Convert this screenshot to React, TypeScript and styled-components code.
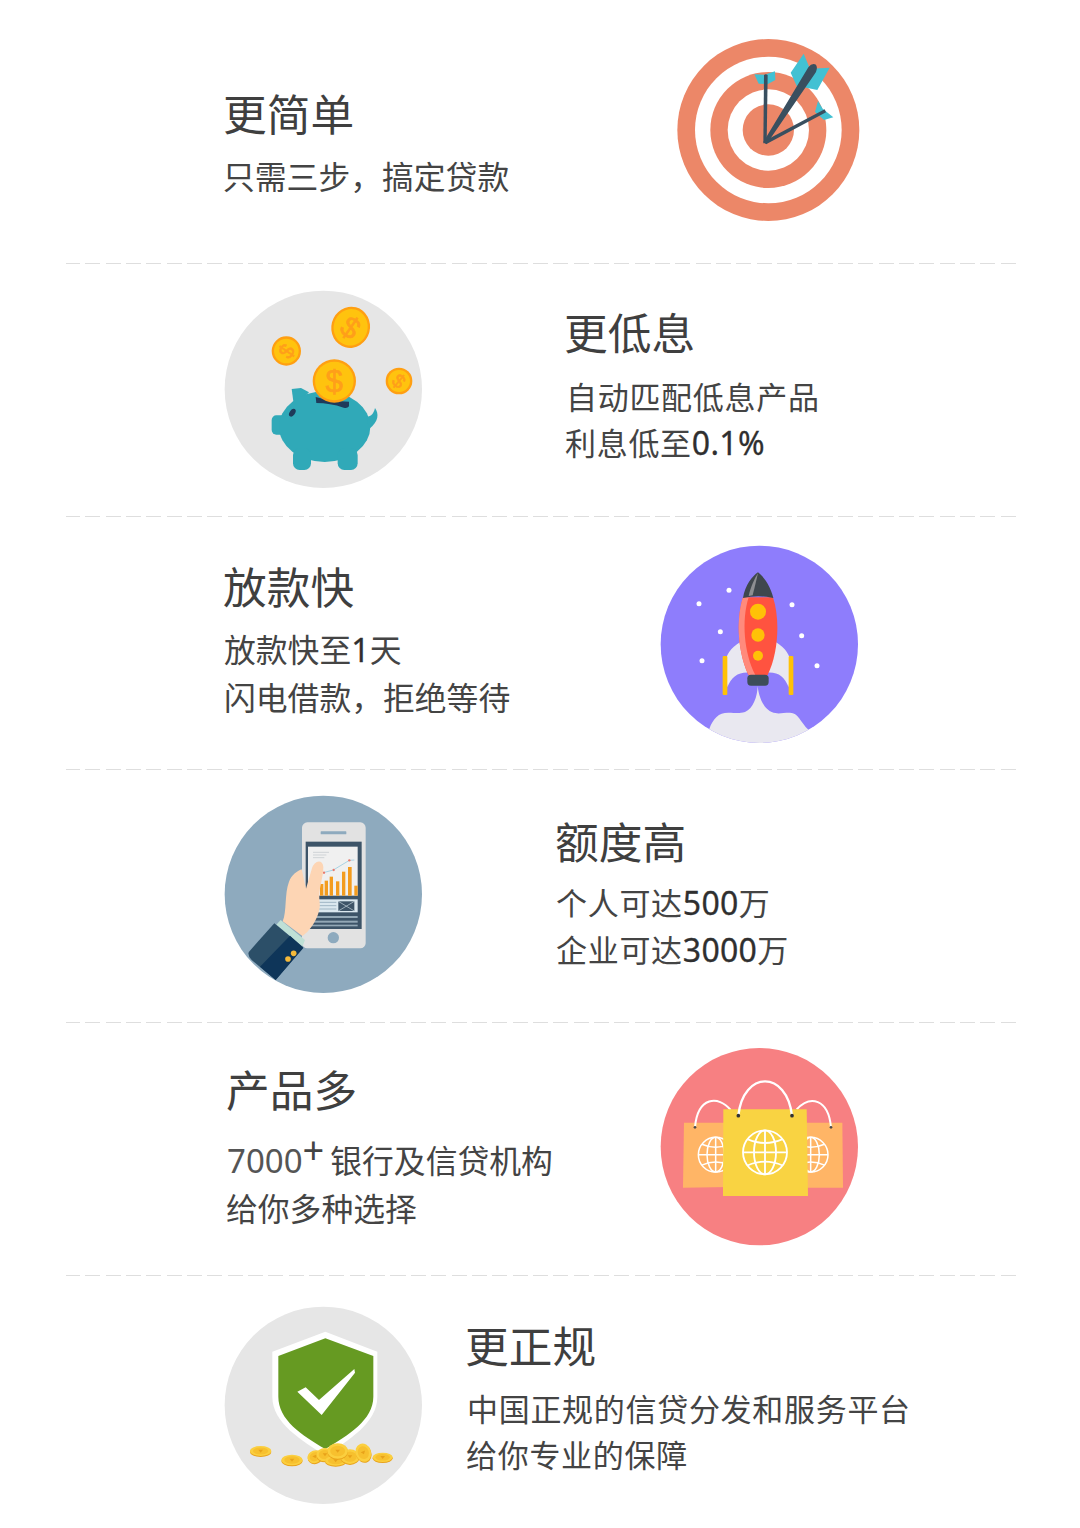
import React from "react";
import styled, { createGlobalStyle } from "styled-components";

const Global = createGlobalStyle`
  html, body { margin: 0; padding: 0; background: #fff; }
  body { font-family: "Noto Sans CJK SC", "Noto Sans", sans-serif; color: #444; }
`;

const Page = styled.main`
  width: 1080px;
  height: 1528px;
  padding: 0 64px 0 66px;
  box-sizing: border-box;
  overflow: hidden;
`;

const Row = styled.section<{ $cols: string; $pad: number; $h: number; $last?: boolean }>`
  display: grid;
  grid-template-columns: ${(p) => p.$cols};
  align-items: start;
  height: ${(p) => p.$h}px;
  padding-left: ${(p) => p.$pad}px;
  box-sizing: border-box;
  border-bottom: ${(p) => (p.$last ? "none" : "1px solid transparent")};
  border-image: ${(p) =>
    p.$last ? "none" : "repeating-linear-gradient(90deg, #dedede 0 15px, transparent 15px 20.3px) 1"};
`;

const Copy = styled.div<{ $top: number }>`
  margin-top: ${(p) => p.$top}px;
`;

const Title = styled.h2<{ $gap: number }>`
  margin: 0 0 ${(p) => p.$gap}px -1px;
  font-size: 43.7px;
  line-height: 60px;
  font-weight: 400;
  color: #3f3f3f;
  white-space: nowrap;
`;

const Line = styled.p<{ $indent?: number; $full?: boolean }>`
  margin: 0 0 0 ${(p) => p.$indent ?? 0}px;
  font-size: ${(p) => (p.$full ? 31.8 : 31)}px;
  letter-spacing: ${(p) => (p.$full ? 0 : 0.7)}px;
  line-height: 46px;
  font-weight: 400;
  color: #444;
  white-space: nowrap;
`;

const Num = styled.span`
  font-family: "Noto Sans", sans-serif;
  font-weight: 400;
  font-size: 32px;
  letter-spacing: 0.3px;
  color: #2f2f2f;
  -webkit-text-stroke: 0.3px #2f2f2f;
`;

const Thin = styled.span`
  font-family: "Noto Sans", sans-serif;
  font-weight: 400;
  font-size: 33px;
  letter-spacing: 0;
  color: #555;
`;

const Plus = styled.sup`
  font-family: "Noto Sans", sans-serif;
  font-weight: 400;
  font-size: 38px;
  line-height: 0;
  vertical-align: 9px;
  margin-right: 6px;
  color: #444;
`;

const Pic = styled.svg<{ $top: number }>`
  display: block;
  margin-top: ${(p) => p.$top}px;
  filter: blur(0.4px);
`;

const Target = ({ top }: { top: number }) => (
  <Pic $top={top} width={210} height={200} viewBox="0 0 630 600">
    <circle cx="325" cy="300" r="273" fill="#ec8768" />
    <circle cx="325" cy="300" r="220" fill="#fff" />
    <circle cx="325" cy="300" r="174" fill="#ec8768" />
    <circle cx="325" cy="300" r="122" fill="#fff" />
    <circle cx="325" cy="300" r="77" fill="#ec8768" />
    <path d="M283 133 L314 134 L345 124 L346 150 L324 162 L296 161 Z" fill="#42c1d3" />
    <path d="M431 71 L450 116 L509 113 L472 180 L432 172 L412 172 L392 128 Z" fill="#42c1d3" />
    <path d="M474 213 L488 236 L520 262 L492 270 L465 246 Z" fill="#42c1d3" />
    <path d="M310 340 L312 135 Q317 130 323 135 L320 340 Z" fill="#394f5f" />
    <path d="M310 336 L445 112 Q456 98 468 104 Q475 116 464 132 L320 342 Z" fill="#394f5f" />
    <path d="M312 334 L494 238 L498 247 L318 343 Z" fill="#394f5f" />
  </Pic>
);

const Coin = ({ x, y, rx, ry, rot = 0, flip = 0 }: { x: number; y: number; rx: number; ry: number; rot?: number; flip?: number }) => (
  <g transform={`rotate(${rot} ${x} ${y})`}>
    <ellipse cx={x} cy={y} rx={rx} ry={ry} fill="#ff9f12" />
    <ellipse cx={x} cy={y} rx={rx - 7} ry={ry - 7} fill="#ffc30e" />
    <text
      x={x}
      y={y + ry * 0.52}
      textAnchor="middle"
      fontFamily="Liberation Sans, sans-serif"
      fontWeight="400"
      fontSize={ry * 1.45}
      stroke="#ff9f1a"
      strokeWidth="2"
      fill="#ff9f1a"
      transform={`rotate(${flip} ${x} ${y})`}
    >
      $
    </text>
  </g>
);

const Piggy = ({ top }: { top: number }) => (
  <Pic $top={top} width={215} height={210} viewBox="0 0 645 630">
    <circle cx="325" cy="313" r="296" fill="#e6e6e6" />
    <g fill="#30a9b8">
      <path d="M230 312 L258 309 L282 322 L255 350 L236 356 Z" />
      <rect x="170" y="391" width="44" height="58" rx="14" />
      <ellipse cx="329" cy="425" rx="137" ry="106" />
      <rect x="234" y="490" width="54" height="65" rx="20" />
      <rect x="368" y="490" width="60" height="65" rx="20" />
      <path d="M455 395 C470 395 476 385 480 369 C492 385 492 410 462 432 Z" />
    </g>
    <ellipse cx="232" cy="383" rx="8" ry="13" fill="#1f3a5a" transform="rotate(35 232 383)" />
    <path d="M302 336 Q350 350 402 350 L402 364 Q396 372 386 368 Q345 354 304 354 Z" fill="#1f3a5a" />
    <Coin x={407} y={127} rx={58} ry={62} rot={15} flip={20} />
    <Coin x={214} y={198} rx={44} ry={44} flip={-55} />
    <Coin x={358} y={288} rx={65} ry={65} />
    <Coin x={552} y={288} rx={40} ry={40} flip={40} />
  </Pic>
);

const Rocket = ({ top }: { top: number }) => (
  <Pic $top={top} width={215} height={210} viewBox="0 0 645 630">
    <defs>
      <clipPath id="rocketDisc">
        <circle cx="328" cy="313" r="296" />
      </clipPath>
    </defs>
    <circle cx="328" cy="313" r="296" fill="#8e7dfc" />
    <g clipPath="url(#rocketDisc)" fill="#e9e8f0">
      <path d="M178 566 C190 535 205 518 235 518 C255 518 265 522 285 516 C310 505 322 470 323 438 C326 470 340 505 365 516 C385 524 395 518 420 518 C445 518 450 545 476 570 L480 640 L170 640 Z" />
      <path d="M272 305 C240 325 228 345 225 370 L232 442 C245 410 265 395 300 398 Z" />
      <path d="M376 305 C408 325 420 345 423 370 L416 442 C403 410 385 395 350 398 Z" />
    </g>
    <rect x="218" y="348" width="14" height="117" rx="3" fill="#ffc107" />
    <rect x="416" y="348" width="14" height="117" rx="3" fill="#ffc107" />
    <path d="M279 172 C257 240 264 340 295 405 L353 405 C385 340 391 240 369 172 Z" fill="#ff5340" />
    <path d="M296 172 C274 240 282 340 316 405 L296 405 C264 340 257 240 279 172 Z" fill="#ff8a7c" />
    <path d="M279 174 C285 135 308 108 324 97 C342 110 362 140 370 174 Q325 164 279 174 Z" fill="#3f474d" />
    <path d="M296 168 C302 140 314 115 324 100 C318 125 312 150 308 166 Z" fill="#8d8f92" />
    <circle cx="324" cy="215" r="24" fill="#ffc107" />
    <circle cx="324" cy="285" r="20" fill="#ffc107" />
    <circle cx="324" cy="347" r="15" fill="#ffc107" />
    <rect x="292" y="404" width="64" height="33" rx="11" fill="#3d4d58" />
    <g fill="#fff">
      <circle cx="237" cy="151" r="7.5" />
      <circle cx="147" cy="191" r="7.5" />
      <circle cx="211" cy="275" r="7.5" />
      <circle cx="156" cy="362" r="7.5" />
      <circle cx="426" cy="194" r="7.5" />
      <circle cx="455" cy="287" r="7.5" />
      <circle cx="501" cy="377" r="7.5" />
    </g>
  </Pic>
);

const Phone = ({ top }: { top: number }) => (
  <Pic $top={top} width={215} height={210} viewBox="0 0 645 630">
    <circle cx="325" cy="313" r="296" fill="#8eaabe" />
    <rect x="261" y="97" width="191" height="378" rx="16" fill="#e2e2e2" />
    <rect x="317" y="124" width="77" height="9" rx="2" fill="#8eaabe" />
    <circle cx="355" cy="443" r="17" fill="#8eaabe" />
    <rect x="272" y="155" width="168" height="262" fill="#3d5468" />
    <rect x="279" y="170" width="149" height="147" fill="#f0f0f0" />
    <g fill="#f39c1f">
      <rect x="315" y="282" width="10" height="35" />
      <rect x="329" y="272" width="10" height="45" />
      <rect x="344" y="260" width="10" height="57" />
      <rect x="363" y="274" width="10" height="43" />
      <rect x="381" y="245" width="10" height="72" />
      <rect x="399" y="231" width="11" height="86" />
      <rect x="418" y="287" width="10" height="30" />
    </g>
    <polyline points="325,248 355,240 403,211 418,210" fill="none" stroke="#a9d3e4" strokeWidth="3" />
    <g fill="#e97b6e">
      <circle cx="327" cy="248" r="3.5" />
      <circle cx="356" cy="240" r="3.5" />
      <circle cx="403" cy="211" r="3.5" />
    </g>
    <g stroke="#cfd3d6" strokeWidth="3">
      <line x1="294" y1="187" x2="342" y2="187" />
      <line x1="294" y1="195" x2="334" y2="195" />
      <line x1="294" y1="203" x2="328" y2="203" />
    </g>
    <rect x="296" y="328" width="132" height="39" fill="#dbe8ef" />
    <g stroke="#9fb6c4" strokeWidth="3">
      <line x1="300" y1="337" x2="364" y2="337" />
      <line x1="300" y1="347" x2="364" y2="347" />
      <line x1="300" y1="357" x2="364" y2="357" />
    </g>
    <rect x="370" y="334" width="48" height="29" fill="#3d5468" />
    <path d="M370 334 L418 363 M418 334 L370 363" stroke="#c7d6de" strokeWidth="2" />
    <g fill="#93a8b6">
      <rect x="290" y="378" width="138" height="6" />
      <rect x="290" y="392" width="138" height="6" />
      <rect x="290" y="404" width="138" height="5" />
    </g>
    <path
      d="M203 394 C216 365 208 310 222 275 C230 255 246 243 260 238 L273 296 L290 238 C296 212 322 205 325 230 C326 262 308 300 314 338 C318 370 290 420 262 438 Z"
      fill="#fdd5b4"
    />
    <path d="M197 390 L270 450 L262 470 L184 404 Z" fill="#bfe0d6" />
    <path d="M178 400 L265 472 L182 570 L110 510 Q96 495 102 485 Z" fill="#2c4f68" />
    <path d="M225 437 L265 474 L182 570 L135 530 Z" fill="#0e3559" />
    <circle cx="236" cy="490" r="8.5" fill="#f5b93a" />
    <circle cx="219" cy="507" r="8.5" fill="#f5b93a" />
  </Pic>
);

const Globe = ({ x, y, r, w }: { x: number; y: number; r: number; w: number }) => (
  <g fill="none" stroke="#fff" strokeWidth={w}>
    <circle cx={x} cy={y} r={r} />
    <ellipse cx={x} cy={y} rx={r * 0.5} ry={r} />
    <line x1={x} y1={y - r} x2={x} y2={y + r} />
    <line x1={x - r} y1={y} x2={x + r} y2={y} />
    <path d={`M${x - r * 0.8} ${y - r * 0.6} Q${x} ${y - r * 0.25} ${x + r * 0.8} ${y - r * 0.6}`} />
    <path d={`M${x - r * 0.8} ${y + r * 0.6} Q${x} ${y + r * 0.25} ${x + r * 0.8} ${y + r * 0.6}`} />
  </g>
);

const Bags = ({ top }: { top: number }) => (
  <Pic $top={top} width={215} height={210} viewBox="0 0 645 630">
    <circle cx="328" cy="320" r="296" fill="#f78082" />
    <polygon points="102,248 240,248 240,441 99,443" fill="#ffb566" />
    <polygon points="460,248 577,248 579,443 460,443" fill="#ffb566" />
    <Globe x={197} y={344} r={52} w={4.5} />
    <Globe x={482} y={344} r={52} w={4.5} />
    <path d="M135 262 C143 170 205 165 242 210" fill="none" stroke="#fff" strokeWidth="6" />
    <path d="M440 208 C480 165 535 175 543 262" fill="none" stroke="#fff" strokeWidth="6" />
    <circle cx="135" cy="262" r="4" fill="#4a4a4a" />
    <circle cx="543" cy="262" r="4" fill="#4a4a4a" />
    <polygon points="220,208 470,208 474,468 219,468" fill="#f9d342" />
    <path d="M265 227 C280 90 410 90 426 227" fill="none" stroke="#fff" strokeWidth="7" />
    <circle cx="265" cy="227" r="5.5" fill="#333" />
    <circle cx="426" cy="227" r="5.5" fill="#333" />
    <Globe x={345} y={337} r={66} w={5.5} />
  </Pic>
);

const Gold = ({ x, y, rx, ry, rot = 0 }: { x: number; y: number; rx: number; ry: number; rot?: number }) => (
  <g transform={`rotate(${rot} ${x} ${y})`}>
    <ellipse cx={x} cy={y + 3} rx={rx} ry={ry} fill="#e8a21a" />
    <ellipse cx={x} cy={y} rx={rx} ry={ry} fill="#fbcf3f" />
    <ellipse cx={x} cy={y} rx={rx * 0.72} ry={ry * 0.7} fill="#f7c02e" />
    <path d={`M${x - 7} ${y - 4} L${x} ${y + 5} L${x + 7} ${y - 4} Z`} fill="#e8a21a" />
  </g>
);

const Shield = ({ top }: { top: number }) => (
  <Pic $top={top} width={215} height={210} viewBox="0 0 645 630">
    <circle cx="325" cy="316" r="296" fill="#e6e6e6" />
    <path d="M331 95 L487 155 L487 290 C487 370 400 420 331 467 C260 420 172 370 172 290 L172 155 Z" fill="#fff" />
    <path d="M331 115 L475 168 L475 290 C475 360 400 405 331 447 C260 405 190 360 190 290 L190 168 Z" fill="#669a22" />
    <polygon points="247,275 272,262 312,300 418,207 420,218 320,345" fill="#fff" />
    <Gold x={137} y={453} rx={32} ry={15} />
    <Gold x={231} y={480} rx={32} ry={16} />
    <Gold x={503} y={472} rx={30} ry={14} />
    <Gold x={300} y={470} rx={23} ry={19} rot={-20} />
    <Gold x={330} y={464} rx={26} ry={20} />
    <Gold x={362} y={482} rx={32} ry={15} />
    <Gold x={405} y={470} rx={28} ry={22} />
    <Gold x={368} y={453} rx={31} ry={23} />
    <Gold x={445} y={458} rx={23} ry={28} rot={-20} />
  </Pic>
);

export default function App() {
  return (
    <Page>
      <Global />
      <Row $cols="436px 210px" $pad={158} $h={264}>
        <Copy $top={82}>
          <Title $gap={10}>更简单</Title>
          <Line $full $indent={-1}>只需三步，搞定贷款</Line>
        </Copy>
        <Target top={30} />
      </Row>
      <Row $cols="350px 1fr" $pad={149} $h={253}>
        <Piggy top={21} />
        <Copy $top={37}>
          <Title $gap={12}>更低息</Title>
          <Line $indent={1}>自动匹配低息产品</Line>
          <Line>
            利息低至<Num>0.1%</Num>
          </Line>
        </Copy>
      </Row>
      <Row $cols="426px 215px" $pad={158} $h={253}>
        <Copy $top={38}>
          <Title $gap={10}>放款快</Title>
          <Line $full>
            放款快至<Num>1</Num>天
          </Line>
          <Line $full>闪电借款，拒绝等待</Line>
        </Copy>
        <Rocket top={23} />
      </Row>
      <Row $cols="341px 1fr" $pad={149} $h={253}>
        <Phone top={20} />
        <Copy $top={40}>
          <Title $gap={9}>额度高</Title>
          <Line>
            个人可达<Num>500</Num>万
          </Line>
          <Line>
            企业可达<Num>3000</Num>万
          </Line>
        </Copy>
      </Row>
      <Row $cols="423px 215px" $pad={161} $h={253}>
        <Copy $top={35}>
          <Title $gap={18}>产品多</Title>
          <Line $full>
            <Thin>7000</Thin>
            <Plus>+</Plus>银行及信贷机构
          </Line>
          <Line $full $indent={-1}>给你多种选择</Line>
        </Copy>
        <Bags top={17} />
      </Row>
      <Row $cols="251px 1fr" $pad={149} $h={252} $last>
        <Shield top={24} />
        <Copy $top={38}>
          <Title $gap={11}>更正规</Title>
          <Line $indent={1}>中国正规的信贷分发和服务平台</Line>
          <Line>给你专业的保障</Line>
        </Copy>
      </Row>
    </Page>
  );
}
